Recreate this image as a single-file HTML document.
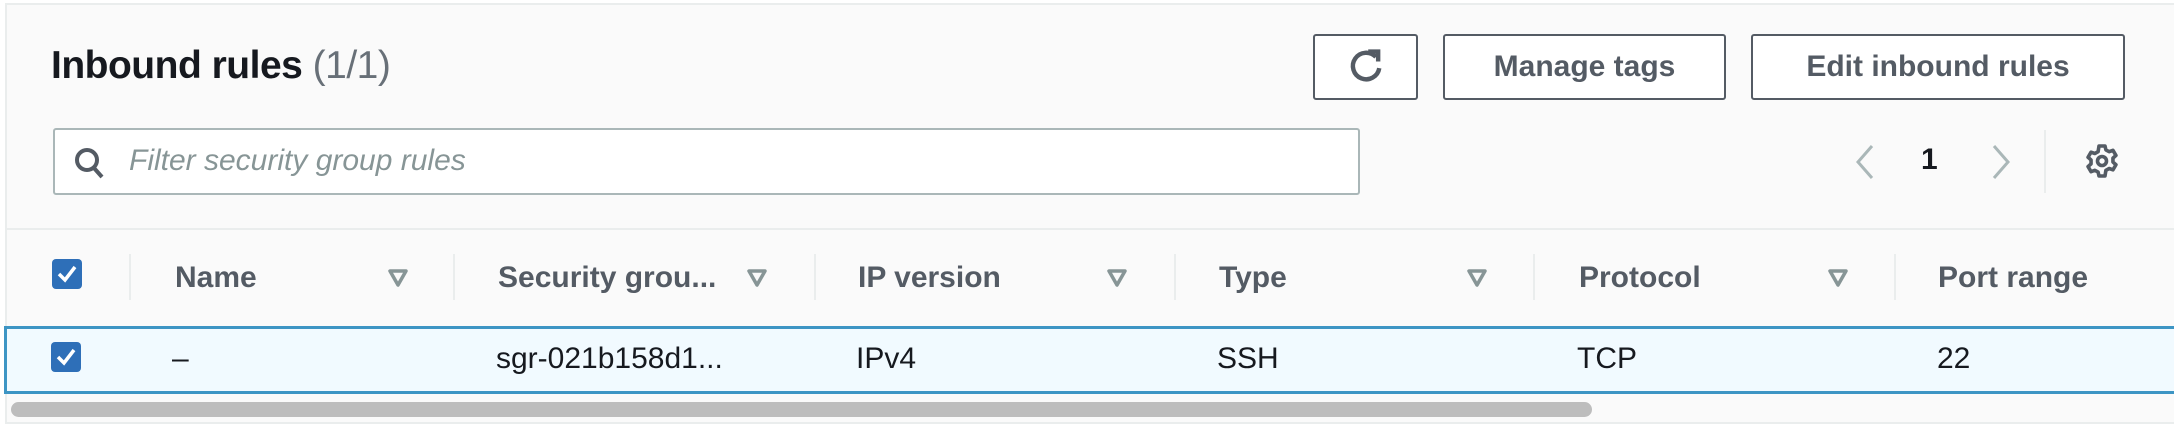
<!DOCTYPE html>
<html><head><meta charset="utf-8"><style>
*{margin:0;padding:0;box-sizing:border-box}
body{width:2174px;height:426px;background:#fff;font-family:"Liberation Sans",sans-serif;position:relative;overflow:hidden}
.panel{position:absolute;left:5px;top:3px;width:2169px;height:421px;background:#fafafa;border:2px solid #eaeded;border-right:none}
.a{position:absolute;white-space:nowrap}
.btn{position:absolute;top:34px;height:66px;border:2px solid #545b64;border-radius:3px;background:#fff;color:#545b64;font-weight:bold;font-size:30px;display:flex;align-items:center;justify-content:center}
.hd{position:absolute;top:261px;font-size:30px;font-weight:bold;color:#545b64}
.fi{position:absolute;top:268px}
.cd{position:absolute;top:254px;width:2px;height:46px;background:#eaeded}
.cell{position:absolute;top:342px;font-size:30px;color:#16191f}
.cb{position:absolute;left:52px;width:30px;height:30px;background:#2e6fb8;border-radius:4px}
</style></head><body>
<div class="panel"></div>
<div class="a" style="left:51px;top:44px;font-size:39px;font-weight:bold;color:#16191f;letter-spacing:-0.5px">Inbound rules <span style="font-weight:normal;color:#687078">(1/1)</span></div>
<div class="btn" style="left:1313px;width:105px"><svg width="40" height="42" viewBox="0 0 36 38"><path d="M27 10 A12 12 0 1 0 30 20" fill="none" stroke="#545b64" stroke-width="4"/><path d="M20 5 L29 5 L29 14" fill="none" stroke="#545b64" stroke-width="4"/></svg></div>
<div class="btn" style="left:1443px;width:283px">Manage tags</div>
<div class="btn" style="left:1751px;width:374px">Edit inbound rules</div>
<div class="a" style="left:53px;top:128px;width:1307px;height:67px;background:#fff;border:2px solid #aab7b8;border-radius:3px"></div>
<svg class="a" style="left:74px;top:147px" width="32" height="34" viewBox="0 0 32 34"><circle cx="13" cy="13" r="10" fill="none" stroke="#545b64" stroke-width="4"/><path d="M20 21 L28 30" stroke="#545b64" stroke-width="4"/></svg>
<div class="a" style="left:129px;top:144px;font-size:30px;font-style:italic;color:#879596">Filter security group rules</div>
<svg class="a" style="left:1852px;top:143px" width="26" height="38"><path d="M20 3 L6 19 L20 35" fill="none" stroke="#aab7b8" stroke-width="3"/></svg>
<div class="a" style="left:1921px;top:143px;font-size:30px;font-weight:bold;color:#16191f">1</div>
<svg class="a" style="left:1988px;top:143px" width="26" height="38"><path d="M6 3 L20 19 L6 35" fill="none" stroke="#aab7b8" stroke-width="3"/></svg>
<div class="a" style="left:2044px;top:130px;width:2px;height:63px;background:#eaeded"></div>
<svg class="a" style="left:2084px;top:143px" width="36" height="36" viewBox="0 0 24 24"><path d="M10 2h4l.6 2.6 2.2 1.2 2.5-.9 2 3.4-2 1.8v2.6l2 1.8-2 3.4-2.5-.9-2.2 1.2L14 22h-4l-.6-2.6-2.2-1.2-2.5.9-2-3.4 2-1.8v-2.6l-2-1.8 2-3.4 2.5.9 2.2-1.2z" fill="none" stroke="#545b64" stroke-width="2.4" stroke-linejoin="round"/><circle cx="12" cy="12" r="3" fill="none" stroke="#545b64" stroke-width="2.4"/></svg>
<div class="a" style="left:5px;top:228px;width:2169px;height:2px;background:#eaeded"></div>
<div class="cb" style="top:259px"><svg width="30" height="30"><path d="M7 15 L13 21 L23 8" fill="none" stroke="#fff" stroke-width="3.5"/></svg></div>
<div class="cd" style="left:129px"></div><div class="cd" style="left:453px"></div><div class="cd" style="left:814px"></div><div class="cd" style="left:1174px"></div><div class="cd" style="left:1533px"></div><div class="cd" style="left:1894px"></div>
<div class="hd" style="left:175px">Name</div>
<div class="hd" style="left:498px">Security grou...</div>
<div class="hd" style="left:858px">IP version</div>
<div class="hd" style="left:1219px">Type</div>
<div class="hd" style="left:1579px">Protocol</div>
<div class="hd" style="left:1938px">Port range</div>
<svg class="fi" style="left:387px" width="22" height="20"><path d="M3 3 L19 3 L11 17 Z" fill="none" stroke="#879596" stroke-width="3.5" stroke-linejoin="round"/></svg>
<svg class="fi" style="left:746px" width="22" height="20"><path d="M3 3 L19 3 L11 17 Z" fill="none" stroke="#879596" stroke-width="3.5" stroke-linejoin="round"/></svg>
<svg class="fi" style="left:1106px" width="22" height="20"><path d="M3 3 L19 3 L11 17 Z" fill="none" stroke="#879596" stroke-width="3.5" stroke-linejoin="round"/></svg>
<svg class="fi" style="left:1466px" width="22" height="20"><path d="M3 3 L19 3 L11 17 Z" fill="none" stroke="#879596" stroke-width="3.5" stroke-linejoin="round"/></svg>
<svg class="fi" style="left:1827px" width="22" height="20"><path d="M3 3 L19 3 L11 17 Z" fill="none" stroke="#879596" stroke-width="3.5" stroke-linejoin="round"/></svg>
<div class="a" style="left:4px;top:326px;width:2170px;height:68px;background:#f1faff;border:3px solid #3d95c4;border-right:none"></div>
<div class="cb" style="top:342px;left:51px"><svg width="30" height="30"><path d="M7 15 L13 21 L23 8" fill="none" stroke="#fff" stroke-width="3.5"/></svg></div>
<div class="cell" style="left:172px">–</div>
<div class="cell" style="left:496px">sgr-021b158d1...</div>
<div class="cell" style="left:856px">IPv4</div>
<div class="cell" style="left:1217px">SSH</div>
<div class="cell" style="left:1577px">TCP</div>
<div class="cell" style="left:1937px">22</div>
<div class="a" style="left:11px;top:402px;width:1581px;height:15px;background:#bdbdbd;border-radius:8px"></div>
</body></html>
